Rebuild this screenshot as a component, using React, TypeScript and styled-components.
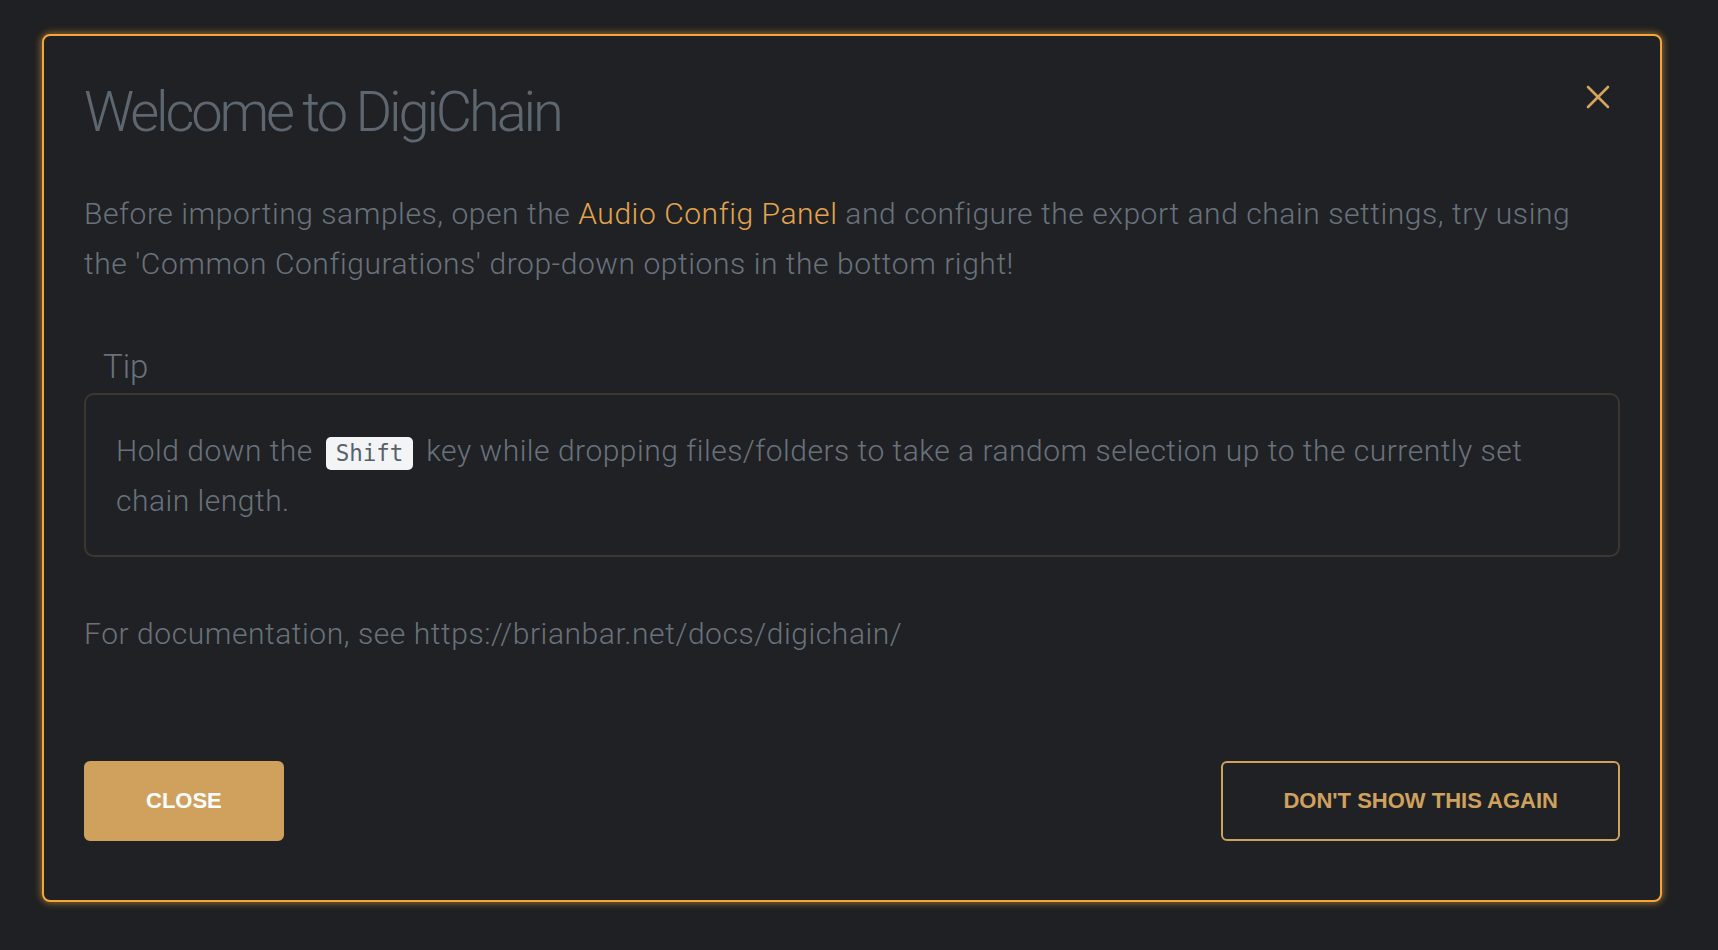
import React from "react";
import styled, { createGlobalStyle } from "styled-components";

const GlobalStyle = createGlobalStyle`
  html, body {
    margin: 0;
    padding: 0;
    background: #1f2023;
  }
  body {
    font-family: "Roboto", "Liberation Sans", sans-serif;
    font-weight: 300;
    color: #69727b;
  }
  * { box-sizing: border-box; }
`;

const Page = styled.div`
  min-height: 950px;
  padding: 34px 0 0 42px;
`;

const Modal = styled.div`
  position: relative;
  width: 1620px;
  height: 868px;
  background: #202125;
  border: 2px solid #f4a739;
  border-radius: 8px;
  box-shadow: 0 0 7px 1px rgba(244, 167, 57, 0.55);
  padding: 42px 40px 59px;
  display: flex;
  flex-direction: column;
`;

const Title = styled.h2`
  margin: 0;
  font-family: "Roboto", "Liberation Sans", sans-serif;
  font-weight: 300;
  font-size: 56px;
  line-height: 68px;
  letter-spacing: -0.056em;
  color: #5e666f;
`;

const CloseIcon = styled.button`
  position: absolute;
  top: 49px;
  right: 50px;
  width: 24px;
  height: 24px;
  padding: 0;
  border: none;
  background: transparent;
  cursor: pointer;
  display: flex;
  svg { display: block; }
`;

const Text = styled.p<{ $top: number }>`
  margin: ${(p) => p.$top}px 0 0;
  font-size: 30px;
  line-height: 50px;
  font-weight: 300;
  letter-spacing: 0.56px;
  color: #69727b;
`;

const Link = styled.a`
  color: #e2a44d;
  text-decoration: none;
`;

const TipLabel = styled.div`
  margin-top: 58px;
  padding-left: 19px;
  font-size: 33px;
  line-height: 40px;
  font-weight: 300;
  color: #69727b;
`;

const TipBox = styled.div`
  margin-top: 6px;
  border: 2px solid #3d372f;
  border-radius: 10px;
  padding: 31px 30px 29px;
`;

const TipText = styled.p`
  margin: 0;
  font-size: 30px;
  line-height: 50px;
  font-weight: 300;
  letter-spacing: 0.5px;
  color: #69727b;
`;

const Kbd = styled.kbd`
  display: inline-block;
  font-family: "DejaVu Sans Mono", "Liberation Mono", monospace;
  font-size: 22.5px;
  line-height: 23px;
  letter-spacing: 0;
  padding: 5px 10px 5px;
  border-radius: 5px;
  background: #f3f4f6;
  color: #58606a;
  vertical-align: 0px;
  margin: 0 5px;
`;

const Footer = styled.div`
  margin-top: auto;
  display: flex;
  justify-content: space-between;
  align-items: center;
`;

const Button = styled.button<{ $variant: "primary" | "outline" }>`
  height: 80px;
  padding: 0 60px;
  border-radius: 6px;
  font-family: "Liberation Sans", Arial, sans-serif;
  font-weight: 700;
  font-size: 22px;
  text-transform: uppercase;
  cursor: pointer;
  border: 2px solid #cfa15d;
  background: ${(p) => (p.$variant === "primary" ? "#cfa15d" : "transparent")};
  color: ${(p) => (p.$variant === "primary" ? "#ffffff" : "#cfa15d")};
`;

export default function App() {
  return (
    <>
      <GlobalStyle />
      <Page>
        <Modal>
          <CloseIcon aria-label="Close">
            <svg width="24" height="24" viewBox="0 0 24 24">
              <line x1="2" y1="2" x2="22" y2="22" stroke="#d6a35e" strokeWidth="2.6" strokeLinecap="round" />
              <line x1="22" y1="2" x2="2" y2="22" stroke="#d6a35e" strokeWidth="2.6" strokeLinecap="round" />
            </svg>
          </CloseIcon>
          <Title>Welcome to DigiChain</Title>
          <Text $top={43}>
            Before importing samples, open the <Link href="#">Audio Config Panel</Link> and configure the
            export and chain settings, try using
            <br />
            the 'Common Configurations' drop-down options in the bottom right!
          </Text>
          <TipLabel>Tip</TipLabel>
          <TipBox>
            <TipText>
              Hold down the <Kbd>Shift</Kbd> key while dropping files/folders to take a random selection up
              to the currently set
              <br />
              chain length.
            </TipText>
          </TipBox>
          <Text $top={52}>For documentation, see https://brianbar.net/docs/digichain/</Text>
          <Footer>
            <Button $variant="primary">Close</Button>
            <Button $variant="outline">Don't show this again</Button>
          </Footer>
        </Modal>
      </Page>
    </>
  );
}
